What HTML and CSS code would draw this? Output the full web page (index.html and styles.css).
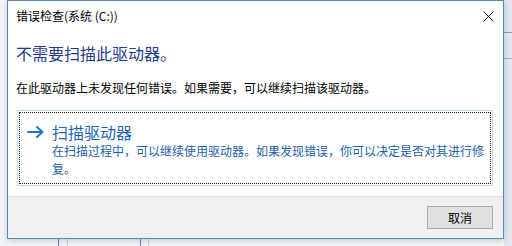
FILE: index.html
```html
<!DOCTYPE html>
<html lang="zh-CN">
<head>
<meta charset="utf-8">
<title>错误检查</title>
<link rel="stylesheet" href="styles.css">
</head>
<body>
<div class="desk">
  <div class="dialog">
    <div class="titlebar">
      <span class="title">错误检查(系统 (C:))</span>
      <span class="close" aria-label="关闭">
        <svg width="11" height="11" viewBox="0 0 11 11"><path d="M0.5 0.5 L10.5 10.5 M10.5 0.5 L0.5 10.5" stroke="#111" stroke-width="1" fill="none"/></svg>
      </span>
    </div>
    <div class="content">
      <h1 class="instruction">不需要扫描此驱动器。</h1>
      <p class="info">在此驱动器上未发现任何错误。如果需要，可以继续扫描该驱动器。</p>
      <div class="cmdlink">
        <div class="cmdfocus">
          <span class="arrow">
            <svg width="17" height="12" viewBox="0 0 17 12"><path d="M1 6 H15.5 M10 1 L15.5 6 L10 11" stroke="#1f74c8" stroke-width="2" fill="none" stroke-linecap="round" stroke-linejoin="round"/></svg>
          </span>
          <div class="cmdtext">
            <div class="cmdtitle">扫描驱动器</div>
            <div class="cmddesc">在扫描过程中，可以继续使用驱动器。如果发现错误，你可以决定是否对其进行修复。</div>
          </div>
        </div>
      </div>
    </div>
    <div class="footer">
      <button class="btn">取消</button>
    </div>
  </div>
</div>
</body>
</html>
```

FILE: styles.css
```css
html, body {
  margin: 0;
  padding: 0;
}
body {
  width: 512px;
  height: 246px;
  overflow: hidden;
  font-family: "Noto Sans CJK SC", "Liberation Sans", sans-serif;
  background-color: #f4f6f9;
  background-image:
    linear-gradient(#7f9fbf, #7f9fbf),
    linear-gradient(#9cb3c9, #9cb3c9),
    linear-gradient(#5d86b4, #5d86b4),
    linear-gradient(#c9d3dc, #c9d3dc),
    linear-gradient(#5d86b4, #5d86b4),
    linear-gradient(#c9d3dc, #c9d3dc),
    linear-gradient(#e3e8ee, #e3e8ee);
  background-repeat: no-repeat;
  background-size:
    8px 1px,
    8px 1px,
    1px 10px,
    1px 10px,
    1px 10px,
    1px 10px,
    8px 246px;
  background-position:
    504px 32px,
    504px 58px,
    58px 238px,
    67px 238px,
    140px 238px,
    148px 238px,
    504px 0;
}
.desk {
  padding-left: 7px;
}
.dialog {
  width: 495px;
  height: 237px;
  border: 1px solid #5b87b6;
  background: #ffffff;
  display: flex;
  flex-direction: column;
  box-shadow: 0 2px 6px rgba(60, 80, 110, 0.25);
}
.titlebar {
  height: 30px;
  display: flex;
  align-items: center;
  justify-content: space-between;
  padding: 0 9px 0 8px;
}
.title {
  font-size: 12px;
  line-height: 16px;
  color: #000;
}
.close {
  display: flex;
  width: 11px;
  height: 11px;
  margin-top: 1px;
}
.content {
  height: 165px;
  padding: 11px 8px 0 8px;
  box-sizing: border-box;
}
.instruction {
  margin: 0;
  font-size: 16px;
  font-weight: normal;
  line-height: 22px;
  color: #1f3a8f;
}
.info {
  margin: 15px 0 0 0;
  font-size: 12px;
  line-height: 18px;
  color: #000;
}
.cmdlink {
  margin: 13px 2px 0 1px;
  border: 1px solid #c7d6e4;
  padding: 1px;
  height: 74px;
  box-sizing: border-box;
  height: 76px;
}
.cmdfocus {
  border: 1px dotted #222;
  height: 100%;
  box-sizing: border-box;
  display: flex;
  align-items: flex-start;
  padding: 9px 4px 0 7px;
}
.arrow {
  display: flex;
  width: 17px;
  height: 20px;
  align-items: center;
  margin-right: 8px;
}
.cmdtext {
  flex: 1;
}
.cmdtitle {
  font-size: 16px;
  line-height: 20px;
  color: #1a67b5;
}
.cmddesc {
  font-size: 12px;
  line-height: 18px;
  color: #1d5fa8;
}
.footer {
  flex: 1;
  background: #f0f0f0;
  border-top: 1px solid #dfdfdf;
  display: flex;
  justify-content: flex-end;
  align-items: flex-start;
  padding: 9px 10px 0 0;
}
.btn {
  width: 66px;
  height: 23px;
  background: #e1e1e1;
  border: 1px solid #adadad;
  font-family: "Noto Sans CJK SC", "Liberation Sans", sans-serif;
  font-size: 12px;
  line-height: 16px;
  color: #000;
  padding: 0;
}
```
